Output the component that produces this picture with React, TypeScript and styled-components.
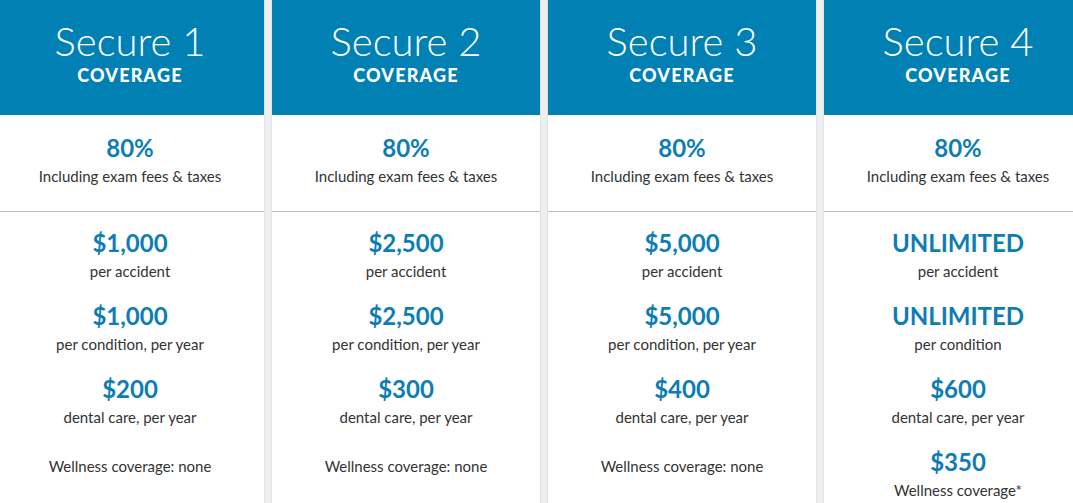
import styled, { createGlobalStyle } from "styled-components";

const GlobalStyle = createGlobalStyle`
  html, body {
    margin: 0;
    padding: 0;
    background: #efefef;
    overflow: hidden;
  }
  body {
    font-family: Lato, "Open Sans", Arial, sans-serif;
    color: #333333;
  }
`;

const Board = styled.div`
  display: grid;
  grid-template-columns: repeat(4, 268px);
  column-gap: 8px;
  margin-left: -4px;
  height: 503px;
`;

const Plan = styled.div`
  display: flex;
  flex-direction: column;
  background: #ffffff;
  box-shadow: 0 0 0 1px #e2e2e2;
  text-align: center;
`;

const Header = styled.div`
  height: 115px;
  box-sizing: border-box;
  padding-top: 19px;
  background: #0180b4;
  color: #ffffff;
`;

const Title = styled.div`
  font-size: 40px;
  font-weight: 300;
  line-height: 44px;
`;

const Subtitle = styled.div`
  margin-top: 2px;
  font-size: 18px;
  font-weight: 900;
  line-height: 20px;
  letter-spacing: 1.2px;
`;

const Section = styled.div<{ $divider?: boolean }>`
  padding-top: ${(p) => (p.$divider ? "19px" : "17px")};
  box-sizing: border-box;
  ${(p) => (p.$divider ? "height: 97px; border-bottom: 1px solid #bdbdbd;" : "")}
`;

const Figure = styled.div`
  font-size: 24px;
  font-weight: 700;
  line-height: 28px;
  color: #0d7db4;
`;

const Caption = styled.div`
  margin-top: 4px;
  font-size: 15px;
  line-height: 20px;
`;

const Block = styled.div`
  & + & {
    margin-top: 21px;
  }
`;

const Note = styled.div`
  margin-top: 29px;
  font-size: 15px;
  line-height: 20px;
`;

type Item = { value: string; label: string };

type PlanData = {
  name: string;
  items: Item[];
  wellness?: Item;
};

const plans: PlanData[] = [
  {
    name: "Secure 1",
    items: [
      { value: "$1,000", label: "per accident" },
      { value: "$1,000", label: "per condition, per year" },
      { value: "$200", label: "dental care, per year" },
    ],
  },
  {
    name: "Secure 2",
    items: [
      { value: "$2,500", label: "per accident" },
      { value: "$2,500", label: "per condition, per year" },
      { value: "$300", label: "dental care, per year" },
    ],
  },
  {
    name: "Secure 3",
    items: [
      { value: "$5,000", label: "per accident" },
      { value: "$5,000", label: "per condition, per year" },
      { value: "$400", label: "dental care, per year" },
    ],
  },
  {
    name: "Secure 4",
    items: [
      { value: "UNLIMITED", label: "per accident" },
      { value: "UNLIMITED", label: "per condition" },
      { value: "$600", label: "dental care, per year" },
    ],
    wellness: { value: "$350", label: "Wellness coverage*" },
  },
];

export default function App() {
  return (
    <>
      <GlobalStyle />
      <Board>
        {plans.map((plan) => (
          <Plan key={plan.name}>
            <Header>
              <Title>{plan.name}</Title>
              <Subtitle>COVERAGE</Subtitle>
            </Header>
            <Section $divider>
              <Figure>80%</Figure>
              <Caption>Including exam fees &amp; taxes</Caption>
            </Section>
            <Section>
              {plan.items.map((item, i) => (
                <Block key={i}>
                  <Figure>{item.value}</Figure>
                  <Caption>{item.label}</Caption>
                </Block>
              ))}
              {plan.wellness ? (
                <Block>
                  <Figure>{plan.wellness.value}</Figure>
                  <Caption>{plan.wellness.label}</Caption>
                </Block>
              ) : (
                <Note>Wellness coverage: none</Note>
              )}
            </Section>
          </Plan>
        ))}
      </Board>
    </>
  );
}
